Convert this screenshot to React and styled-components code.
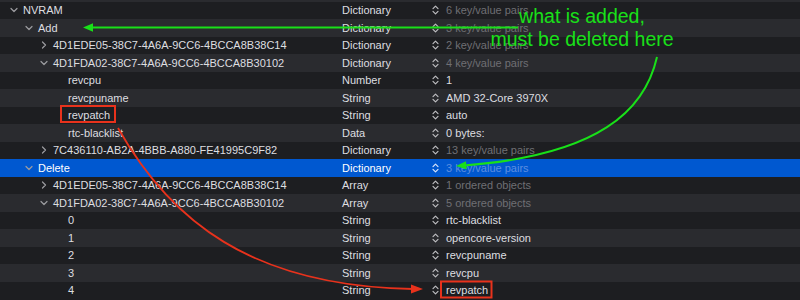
import React from "react";
import styled, { createGlobalStyle } from "styled-components";

const rows = [
  { key: "NVRAM", depth: 0, open: true, type: "Dictionary", value: "6 key/value pairs", dim: true },
  { key: "Add", depth: 1, open: true, type: "Dictionary", value: "3 key/value pairs", dim: true },
  { key: "4D1EDE05-38C7-4A6A-9CC6-4BCCA8B38C14", depth: 2, open: false, type: "Dictionary", value: "2 key/value pairs", dim: true },
  { key: "4D1FDA02-38C7-4A6A-9CC6-4BCCA8B30102", depth: 2, open: true, type: "Dictionary", value: "4 key/value pairs", dim: true },
  { key: "revcpu", depth: 3, type: "Number", value: "1" },
  { key: "revcpuname", depth: 3, type: "String", value: "AMD 32-Core 3970X" },
  { key: "revpatch", depth: 3, type: "String", value: "auto" },
  { key: "rtc-blacklist", depth: 3, type: "Data", value: "0 bytes:" },
  { key: "7C436110-AB2A-4BBB-A880-FE41995C9F82", depth: 2, open: false, type: "Dictionary", value: "13 key/value pairs", dim: true },
  { key: "Delete", depth: 1, open: true, type: "Dictionary", value: "3 key/value pairs", dim: true, selected: true },
  { key: "4D1EDE05-38C7-4A6A-9CC6-4BCCA8B38C14", depth: 2, open: false, type: "Array", value: "1 ordered objects", dim: true },
  { key: "4D1FDA02-38C7-4A6A-9CC6-4BCCA8B30102", depth: 2, open: true, type: "Array", value: "5 ordered objects", dim: true },
  { key: "0", depth: 3, type: "String", value: "rtc-blacklist" },
  { key: "1", depth: 3, type: "String", value: "opencore-version" },
  { key: "2", depth: 3, type: "String", value: "revcpuname" },
  { key: "3", depth: 3, type: "String", value: "revcpu" },
  { key: "4", depth: 3, type: "String", value: "revpatch" },
];

const Chevron = ({ open }) => (
  <svg width="8" height="8" viewBox="0 0 8 8">
    <path
      d={open ? "M1 2.5 L4 5.5 L7 2.5" : "M2.5 1 L5.5 4 L2.5 7"}
      fill="none"
      stroke="#9c9ca0"
      strokeWidth="1.2"
      strokeLinecap="round"
      strokeLinejoin="round"
    />
  </svg>
);

const UpDown = ({ selected }) => (
  <svg width="7" height="10" viewBox="0 0 7 10">
    <path
      d="M1 3.6 L3.5 1.1 L6 3.6 M1 6.4 L3.5 8.9 L6 6.4"
      fill="none"
      stroke={selected ? "#d8e4fa" : "#bdbdc0"}
      strokeWidth="1.2"
      strokeLinecap="round"
      strokeLinejoin="round"
    />
  </svg>
);

const App = () => {
  return (
    <>
      <GlobalStyle />
      <Outline>
        <TopEdge />
        {rows.map((row, i) => (
          <Row key={i} $alt={i % 2 === 1} $selected={row.selected}>
            <KeyCell $depth={row.depth}>
              <Disclosure>{row.open !== undefined && <Chevron open={row.open} />}</Disclosure>
              {row.key}
            </KeyCell>
            <TypeCell>{row.type}</TypeCell>
            <ValueCell>
              <UpDown selected={row.selected} />
              <ValueText $dim={row.dim} $selected={row.selected}>
                {row.value}
              </ValueText>
            </ValueCell>
          </Row>
        ))}

        <Note>
          what is added,
          <br />
          must be deleted here
        </Note>

        <Marks width="800" height="300" viewBox="0 0 800 300">
          {/* green arrows */}
          <line x1="518" y1="27.5" x2="90" y2="27.5" stroke="#19e019" strokeWidth="2" />
          <polygon points="83,27.5 93,23.3 93,31.7" fill="#19e019" />
          <path d="M657 57 C645 110, 600 155, 464 165.5" fill="none" stroke="#19e019" strokeWidth="2" />
          <polygon points="456,166 466,161.2 466.6,169.6" fill="#19e019" />

          {/* red boxes and arrow */}
          <rect x="61" y="106" width="54" height="16" fill="none" stroke="#e8321c" strokeWidth="2" />
          <rect x="441" y="281.5" width="50.5" height="16" fill="none" stroke="#e8321c" strokeWidth="2" />
          <path d="M118 128 C170 220, 250 286, 413 289" fill="none" stroke="#e8321c" strokeWidth="1.8" />
          <polygon points="423,289 411,284.6 411,293.4" fill="#e8321c" />
        </Marks>
      </Outline>
    </>
  );
};

export default App;

// Styled Components

const GlobalStyle = createGlobalStyle`
  html, body {
    margin: 0;
    padding: 0;
    background: #1d1e21;
  }
`;

const Outline = styled.div`
  position: relative;
  width: 800px;
  height: 300px;
  overflow: hidden;
  background: #1d1e21;
  font-family: "Liberation Sans", Arial, sans-serif;
  font-size: 11px;
`;

const TopEdge = styled.div`
  height: 1.5px;
  background: #2a2b2f;
`;

const Row = styled.div`
  display: grid;
  grid-template-columns: 342px 90px 1fr;
  align-items: center;
  height: 17.5px;
  background: ${(p) => (p.$selected ? "#0058d0" : p.$alt ? "#2a2b2f" : "#1d1e21")};
  color: ${(p) => (p.$selected ? "#ffffff" : "#dedee0")};
`;

const KeyCell = styled.div`
  display: flex;
  align-items: center;
  padding-left: ${(p) => 10 + p.$depth * 15}px;
  white-space: nowrap;
  overflow: hidden;
`;

const Disclosure = styled.span`
  display: flex;
  align-items: center;
  width: 13px;
  flex-shrink: 0;
`;

const TypeCell = styled.div`
  white-space: nowrap;
`;

const ValueCell = styled.div`
  display: flex;
  align-items: center;
  gap: 7px;
  white-space: nowrap;
`;

const ValueText = styled.span`
  color: ${(p) =>
    p.$selected ? "#5d8ee0" : p.$dim ? "#6f6f74" : "#dedee0"};
`;

const Note = styled.div`
  position: absolute;
  top: 5px;
  left: 482px;
  width: 200px;
  text-align: center;
  font-size: 19.5px;
  line-height: 23px;
  color: #19e019;
  white-space: nowrap;
`;

const Marks = styled.svg`
  position: absolute;
  top: 0;
  left: 0;
  pointer-events: none;
`;
